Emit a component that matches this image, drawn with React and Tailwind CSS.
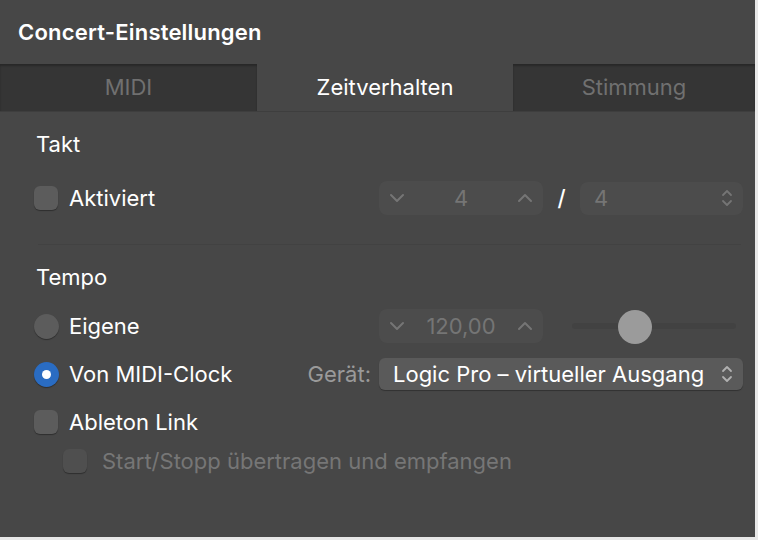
import React from "react";

const font = { fontFamily: "Inter, 'Liberation Sans', sans-serif" };

function ChevDown({ className = "" }) {
  return (
    <svg width="16" height="10" viewBox="0 0 16 10" className={className}>
      <path d="M2 2 L8 8 L14 2" fill="none" stroke="currentColor" strokeWidth="2" strokeLinecap="round" strokeLinejoin="round" />
    </svg>
  );
}
function ChevUp({ className = "" }) {
  return (
    <svg width="16" height="10" viewBox="0 0 16 10" className={className}>
      <path d="M2 8 L8 2 L14 8" fill="none" stroke="currentColor" strokeWidth="2" strokeLinecap="round" strokeLinejoin="round" />
    </svg>
  );
}
function UpDown({ className = "" }) {
  return (
    <svg width="12" height="20" viewBox="0 0 12 20" className={className}>
      <path d="M2 7 L6 3 L10 7 M2 13 L6 17 L10 13" fill="none" stroke="currentColor" strokeWidth="1.8" strokeLinecap="round" strokeLinejoin="round" />
    </svg>
  );
}

function Checkbox({ disabled }) {
  return (
    <div
      className={
        "w-[24px] h-[24px] rounded-[6px] shadow-[0_1px_1px_rgba(0,0,0,0.35)] " +
        (disabled ? "bg-[#4f4f4f]" : "bg-[#5c5c5c]")
      }
    />
  );
}

function Radio({ on }) {
  return on ? (
    <div className="w-[25px] h-[25px] rounded-full bg-[#2a6cc2] flex items-center justify-center shadow-[0_1px_1px_rgba(0,0,0,0.35)]">
      <div className="w-[9px] h-[9px] rounded-full bg-white" />
    </div>
  ) : (
    <div className="w-[25px] h-[25px] rounded-full bg-[#5c5c5c] shadow-[0_1px_1px_rgba(0,0,0,0.35)]" />
  );
}

export default function App() {
  return (
    <div className="w-[758px] h-[540px] bg-[#e8e8e8]" style={font}>
      <div className="w-[755px] h-[537px] bg-[#474747] flex flex-col">
        <div className="h-16 flex items-center pl-[18px] text-[22px] font-semibold text-white tracking-[0.2px]">
          Concert-Einstellungen
        </div>
        <div className="h-12 flex bg-[#353535] text-[22px] border-b border-[#3e3e3e]">
          <div className="w-[257px] flex items-center justify-center text-[#707070] shadow-[inset_0_2px_2px_rgba(0,0,0,0.25)]">
            MIDI
          </div>
          <div className="w-[256px] flex items-center justify-center text-white bg-[#474747]">
            Zeitverhalten
          </div>
          <div className="flex-1 flex items-center justify-center text-[#707070] shadow-[inset_0_2px_2px_rgba(0,0,0,0.25)]">
            Stimmung
          </div>
        </div>

        <div className="flex flex-col pl-[34px] pr-[12px] text-[22px] text-white">
          <div className="h-10 mt-[12px] flex items-center pl-[2px]">Takt</div>

          <div className="h-[36px] mt-[16px] flex items-center">
            <div className="w-[345px] flex items-center gap-[11px]">
              <Checkbox />
              <span>Aktiviert</span>
            </div>
            <div className="w-[164px] h-[34px] rounded-[8px] bg-[#4c4c4c] flex items-center justify-between px-[10px] text-[#757575]">
              <ChevDown />
              <span>4</span>
              <ChevUp />
            </div>
            <div className="w-[37px] flex justify-center text-white font-medium">/</div>
            <div className="flex-1 h-[33px] rounded-[8px] bg-[#4c4c4c] flex items-center justify-between pl-[14px] pr-[10px] text-[#757575]">
              <span>4</span>
              <UpDown />
            </div>
          </div>

          <div className="mt-[28px] h-px bg-[#424242] ml-[4px] mr-[2px]" />

          <div className="h-10 mt-[12px] flex items-center pl-[2px]">Tempo</div>

          <div className="h-[36px] mt-[11px] flex items-center">
            <div className="w-[345px] flex items-center gap-[10px]">
              <Radio />
              <span>Eigene</span>
            </div>
            <div className="w-[164px] h-[34px] rounded-[8px] bg-[#4c4c4c] flex items-center justify-between px-[10px] text-[#757575]">
              <ChevDown />
              <span>120,00</span>
              <ChevUp />
            </div>
            <div className="ml-[29px] w-[164px] h-[36px] relative flex items-center">
              <div className="w-full h-[6px] rounded-full bg-[#424242]" />
              <div className="absolute left-[46px] top-[2px] w-[34px] h-[34px] rounded-full bg-[#9b9b9b]" />
            </div>
          </div>

          <div className="h-[36px] mt-[12px] flex items-center">
            <div className="w-[265px] flex items-center gap-[10px]">
              <Radio on />
              <span>Von MIDI-Clock</span>
            </div>
            <div className="w-[80px] text-right pr-[8px] text-[#9a9a9a]">Gerät:</div>
            <div className="flex-1 h-[32px] rounded-[6px] bg-[#5a5a5a] flex items-center justify-between pl-[14px] pr-[10px] shadow-[0_1px_1px_rgba(0,0,0,0.3)]">
              <span className="whitespace-nowrap">Logic Pro – virtueller Ausgang</span>
              <UpDown className="text-[#b0b0b0]" />
            </div>
          </div>

          <div className="h-[36px] mt-[12px] flex items-center gap-[11px]">
            <Checkbox />
            <span>Ableton Link</span>
          </div>

          <div className="h-[36px] mt-[3px] flex items-center gap-[15px] pl-[29px]">
            <Checkbox disabled />
            <span className="text-[#767676]">Start/Stopp übertragen und empfangen</span>
          </div>
        </div>
      </div>
    </div>
  );
}
